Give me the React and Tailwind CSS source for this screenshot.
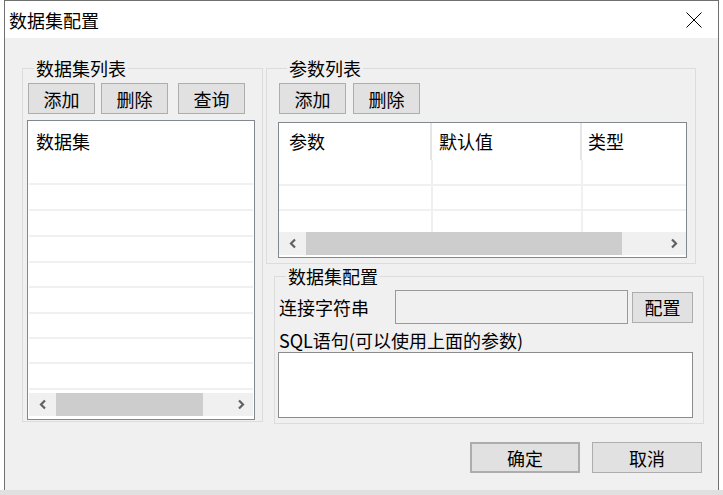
import React from "react";

const Chevron = ({ dir }) => (
    <svg width="8" height="11" viewBox="0 0 8 11">
        <path
            d={dir === "l" ? "M6 1.5 L2 5.5 L6 9.5" : "M2 1.5 L6 5.5 L2 9.5"}
            fill="none"
            stroke="#606060"
            strokeWidth="2.2"
        />
    </svg>
);

const HScroll = ({ thumb }) => (
    <div className="flex h-[23px] shrink-0 bg-[#f0f0f0]">
        <div className="flex w-[27px] items-center justify-center">
            <Chevron dir="l" />
        </div>
        <div className="flex flex-1">
            <div className={`h-full bg-[#cdcdcd] ${thumb}`}></div>
        </div>
        <div className="flex w-[25px] items-center justify-center">
            <Chevron dir="r" />
        </div>
    </div>
);

const Btn = ({ children, className = "" }) => (
    <button
        className={`flex h-[31px] shrink-0 items-center justify-center border border-[#adadad] bg-[#e1e1e1] text-[18px] leading-[24px] text-black ${className}`}
    >
        {children}
    </button>
);

const Group = ({ title, className = "", legendClass = "", children }) => (
    <fieldset className={`shrink-0 border border-[#dcdcdc] ${className}`}>
        <legend
            className={`px-[2px] text-[18px] leading-[20px] text-black ${legendClass}`}
        >
            {title}
        </legend>
        {children}
    </fieldset>
);

const listRows = [26, 26, 26, 25, 26, 25, 25, 26, 26];
const gridRows = [26, 25, 25];

const App = () => {
    return (
        <div className="h-[495px] w-[723px] overflow-hidden bg-white font-['Noto_Sans_CJK_SC',sans-serif] text-black">
            <div className="ml-[4px] flex h-[490px] w-[715px] flex-col border-x border-t border-[#707070]">
                {/* title bar */}
                <div className="flex h-[37px] shrink-0 items-center justify-between bg-white pl-[4px] pr-[16px]">
                    <span className="text-[18px] leading-[24px]">数据集配置</span>
                    <svg width="16" height="16" viewBox="0 0 16 16">
                        <path d="M0.5 0.5 L15.5 15.5 M15.5 0.5 L0.5 15.5" stroke="#000" strokeWidth="1" />
                    </svg>
                </div>

                {/* body */}
                <div className="flex flex-1 flex-col bg-[#f0f0f0] pl-[17px] pr-[16px] pt-[20px]">
                    <div className="flex">
                        {/* 数据集列表 */}
                        <Group
                            title="数据集列表"
                            className="h-[364px] w-[241px] pl-[4px]"
                            legendClass="ml-[7px]"
                        >
                            <div className="mt-[5px] flex">
                                <Btn className="ml-[1px] w-[67px]">添加</Btn>
                                <Btn className="ml-[6px] w-[67px]">删除</Btn>
                                <Btn className="ml-[10px] w-[67px]">查询</Btn>
                            </div>
                            <div className="mt-[6px] flex h-[300px] w-[228px] flex-col border border-[#828790] bg-white p-[1px]">
                                <div className="flex-1 overflow-hidden">
                                    <div className="h-[63px] border-b-2 border-[#f0f0f0] pl-[7px] pt-[7px] text-[18px] leading-[24px]">
                                        数据集
                                    </div>
                                    {listRows.map((h, i) => (
                                        <div
                                            key={i}
                                            className="border-b-2 border-[#f0f0f0]"
                                            style={{ height: h }}
                                        ></div>
                                    ))}
                                </div>
                                <HScroll thumb="w-[147px]" />
                                <div className="h-[2px] shrink-0"></div>
                            </div>
                        </Group>

                        <div className="ml-[3px] flex shrink-0 flex-col">
                            {/* 参数列表 */}
                            <Group
                                title="参数列表"
                                className="h-[206px] w-[430px] pl-[11px]"
                                legendClass="ml-[9px]"
                            >
                                <div className="mt-[5px] flex">
                                    <Btn className="ml-[1px] w-[67px]">添加</Btn>
                                    <Btn className="ml-[7px] w-[67px]">删除</Btn>
                                </div>
                                <div className="mt-[8px] flex h-[136px] w-[409px] flex-col border border-[#828790] bg-white">
                                    <div className="flex-1 overflow-hidden">
                                        <div className="flex h-[37px] text-[18px] leading-[24px]">
                                            <div className="flex w-[153px] items-center border-r-2 border-[#e5e5e5] pb-[2px] pl-[10px]">
                                                参数
                                            </div>
                                            <div className="flex w-[150px] items-center border-r-2 border-[#e5e5e5] pb-[2px] pl-[7px]">
                                                默认值
                                            </div>
                                            <div className="flex flex-1 items-center pb-[2px] pl-[6px]">
                                                类型
                                            </div>
                                        </div>
                                        {gridRows.map((h, i) => (
                                            <div
                                                key={i}
                                                className="flex border-b-2 border-[#f0f0f0]"
                                                style={{ height: h }}
                                            >
                                                <div className="w-[154px] border-r-2 border-[#f0f0f0]"></div>
                                                <div className="w-[150px] border-r-2 border-[#f0f0f0]"></div>
                                                <div className="flex-1"></div>
                                            </div>
                                        ))}
                                    </div>
                                    <HScroll thumb="w-[316px]" />
                                    <div className="h-[2px] shrink-0"></div>
                                </div>
                            </Group>

                            {/* 数据集配置 */}
                            <Group
                                title="数据集配置"
                                className="ml-[8px] mt-[2px] h-[158px] w-[430px] pl-[3px]"
                                legendClass="ml-[8px]"
                            >
                                <div className="mt-[4px] flex items-center">
                                    <span className="w-[117px] shrink-0 pl-[1px] text-[18px] leading-[24px]">
                                        连接字符串
                                    </span>
                                    <div className="h-[34px] w-[233px] shrink-0 border border-[#999999] bg-[#f0f0f0]"></div>
                                    <Btn className="ml-[4px] w-[61px]">配置</Btn>
                                </div>
                                <div className="mt-[4px] pl-[1px] text-[18px] leading-[24px]">
                                    SQL语句(可以使用上面的参数)
                                </div>
                                <div className="h-[66px] w-[415px] border border-[#8c8c8c] bg-white"></div>
                            </Group>
                        </div>
                    </div>

                    {/* footer buttons */}
                    <div className="mt-[18px] flex justify-end gap-[12px]">
                        <Btn className="w-[110px] border-2 border-[#0078d7]">确定</Btn>
                        <Btn className="w-[110px]">取消</Btn>
                    </div>
                </div>
            </div>
            <div className="h-[5px] bg-[#e0e0e0]"></div>
        </div>
    );
};

export default App;
